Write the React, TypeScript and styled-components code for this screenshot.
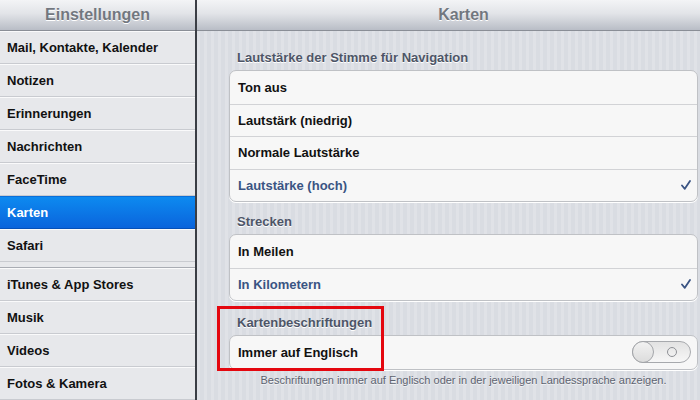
import styled, { createGlobalStyle } from "styled-components";

const Global = createGlobalStyle`
  html, body { margin: 0; padding: 0; }
  body {
    width: 700px;
    height: 400px;
    overflow: hidden;
    font-family: "Liberation Sans", Arial, sans-serif;
  }
`

const Screen = styled.div`
  display: flex;
  width: 700px;
  height: 400px;
  overflow: hidden;
`

const Sidebar = styled.div`
  width: 195px;
  flex-shrink: 0;
  display: flex;
  flex-direction: column;
  background: #e7e8eb;
  border-right: 2px solid #3b3e45;
`

const Detail = styled.div`
  flex: 1;
  display: flex;
  flex-direction: column;
  background-color: #d9dce2;
  background-image: repeating-linear-gradient(90deg, rgba(255,255,255,0.18) 0 3px, rgba(0,0,0,0) 3px 7px);
`

const Bar = styled.div<{ shift?: number }>`
  height: 30px;
  flex-shrink: 0;
  display: flex;
  align-items: center;
  justify-content: center;
  padding-left: ${p => p.shift || 0}px;
  background: linear-gradient(#f3f4f6, #e2e4e8 45%, #b9bdc6);
  border-bottom: 1px solid #8a8e96;
  color: #72777f;
  font-weight: bold;
  font-size: 16px;
  text-shadow: 0 1px 0 #fff;
`

const Group = styled.div`
  display: flex;
  flex-direction: column;
  & + & {
    border-top: 1px solid #a9acb3;
    margin-top: 5px;
  }
`

const NavRow = styled.div<{ active?: boolean }>`
  height: 33px;
  flex-shrink: 0;
  display: flex;
  align-items: center;
  padding-left: 7px;
  font-size: 13px;
  font-weight: bold;
  color: ${p => (p.active ? "#fff" : "#111")};
  background: ${p => (p.active ? "linear-gradient(#0d8af0, #0a64dc)" : "transparent")};
  border-top: 1px solid ${p => (p.active ? "#0a6fd9" : "#fafafb")};
  border-bottom: 1px solid ${p => (p.active ? "#0650b8" : "#c9cbd0")};
  box-sizing: border-box;
`

const Content = styled.div`
  padding: 16px 2px 0 32px;
  display: flex;
  flex-direction: column;
`

const SectionTitle = styled.div`
  font-size: 13px;
  font-weight: bold;
  color: #4d5567;
  text-shadow: 0 1px 0 #fff;
  padding-left: 8px;
  height: 20px;
  display: flex;
  align-items: center;
  margin-bottom: 3px;
`

const Card = styled.div<{ gap?: number }>`
  background: #f7f7f7;
  border: 1px solid #bfc1c5;
  border-radius: 7px;
  box-shadow: 0 1px 0 #fff;
  margin-bottom: ${p => (p.gap === undefined ? 9 : p.gap)}px;
  overflow: hidden;
`

const CardRow = styled.div<{ selected?: boolean }>`
  height: 32.5px;
  box-sizing: border-box;
  display: flex;
  align-items: center;
  justify-content: space-between;
  padding: 0 6px 0 8px;
  font-size: 13px;
  font-weight: bold;
  color: ${p => (p.selected ? "#3a5483" : "#111")};
  & + & { border-top: 1px solid #d2d3d6; }
`

const Check = styled.svg`
  width: 10px;
  height: 10px;
`

const Toggle = styled.div`
  width: 57px;
  height: 20px;
  border-radius: 11px;
  border: 1px solid #a7a9ad;
  background: linear-gradient(#e2e2e2, #f7f7f7);
  display: flex;
  align-items: center;
  justify-content: space-between;
`

const Knob = styled.div`
  width: 20px;
  height: 20px;
  border-radius: 50%;
  border: 1px solid #a3a5a9;
  background: linear-gradient(#f2f2f2, #dcdcdc);
  margin-left: -1px;
`

const OffRing = styled.div`
  width: 8px;
  height: 8px;
  border: 1.5px solid #8f9196;
  border-radius: 50%;
  margin-right: 13px;
`

const Footer = styled.div`
  margin-top: 4px;
  text-align: center;
  font-size: 11px;
  color: #5d6370;
  text-shadow: 0 1px 0 #f2f3f5;
`

const Marked = styled.div`
  position: relative;
  padding-top: 2px;
`

const RedBox = styled.div`
  position: absolute;
  left: -12px;
  top: -4px;
  width: 161px;
  height: 59px;
  border: 3px solid #e4070f;
  pointer-events: none;
`

function CheckMark() {
  return (
    <Check viewBox="0 0 10 10">
      <path d="M1 5.5 L3.8 8.8 L9 1" fill="none" stroke="#3a5483" strokeWidth="1.8" strokeLinecap="round" strokeLinejoin="round" />
    </Check>
  )
}

const top = ["Mail, Kontakte, Kalender", "Notizen", "Erinnerungen", "Nachrichten", "FaceTime", "Karten", "Safari"];
const bottom = ["iTunes & App Stores", "Musik", "Videos", "Fotos & Kamera"];

export default function App() {
  return (
    <>
      <Global />
      <Screen>
        <Sidebar>
          <Bar>Einstellungen</Bar>
          <Group>
            {top.map(t => <NavRow key={t} active={t === "Karten"}>{t}</NavRow>)}
          </Group>
          <Group>
            {bottom.map(t => <NavRow key={t}>{t}</NavRow>)}
          </Group>
        </Sidebar>
        <Detail>
          <Bar shift={30}>Karten</Bar>
          <Content>
            <SectionTitle>Lautstärke der Stimme für Navigation</SectionTitle>
            <Card>
              <CardRow>Ton aus</CardRow>
              <CardRow>Lautstärk (niedrig)</CardRow>
              <CardRow>Normale Lautstärke</CardRow>
              <CardRow selected>Lautstärke (hoch)<CheckMark /></CardRow>
            </Card>
            <SectionTitle>Strecken</SectionTitle>
            <Card>
              <CardRow>In Meilen</CardRow>
              <CardRow selected>In Kilometern<CheckMark /></CardRow>
            </Card>
            <Marked>
              <SectionTitle>Kartenbeschriftungen</SectionTitle>
              <Card gap={0}>
                <CardRow>
                  Immer auf Englisch
                  <Toggle><Knob /><OffRing /></Toggle>
                </CardRow>
              </Card>
              <RedBox />
            </Marked>
            <Footer>Beschriftungen immer auf Englisch oder in der jeweiligen Landessprache anzeigen.</Footer>
          </Content>
        </Detail>
      </Screen>
    </>
  )
}
